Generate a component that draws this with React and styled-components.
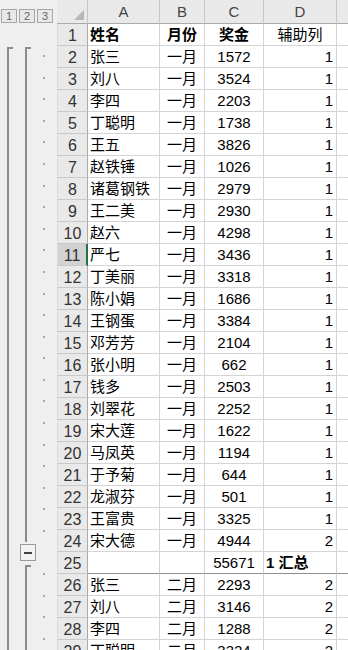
import React from 'react';
import styled, { createGlobalStyle, css } from 'styled-components';

const GlobalStyle = createGlobalStyle`
  html, body {
    margin: 0;
    padding: 0;
    background: #ffffff;
  }
  body {
    font-family: 'Liberation Sans', 'Noto Sans CJK SC', sans-serif;
  }
`;

const ROW_H = 22;
const HEAD_H = 24;

const rows = [
  ['张三', '一月', '1572', '1'],
  ['刘八', '一月', '3524', '1'],
  ['李四', '一月', '2203', '1'],
  ['丁聪明', '一月', '1738', '1'],
  ['王五', '一月', '3826', '1'],
  ['赵铁锤', '一月', '1026', '1'],
  ['诸葛钢铁', '一月', '2979', '1'],
  ['王二美', '一月', '2930', '1'],
  ['赵六', '一月', '4298', '1'],
  ['严七', '一月', '3436', '1'],
  ['丁美丽', '一月', '3318', '1'],
  ['陈小娟', '一月', '1686', '1'],
  ['王钢蛋', '一月', '3384', '1'],
  ['邓芳芳', '一月', '2104', '1'],
  ['张小明', '一月', '662', '1'],
  ['钱多', '一月', '2503', '1'],
  ['刘翠花', '一月', '2252', '1'],
  ['宋大莲', '一月', '1622', '1'],
  ['马凤英', '一月', '1194', '1'],
  ['于予菊', '一月', '644', '1'],
  ['龙淑芬', '一月', '501', '1'],
  ['王富贵', '一月', '3325', '1'],
  ['宋大德', '一月', '4944', '2'],
  { subtotal: true, amount: '55671', label: '1 汇总' },
  ['张三', '二月', '2293', '2'],
  ['刘八', '二月', '3146', '2'],
  ['李四', '二月', '1288', '2'],
  ['丁聪明', '二月', '3324', '2']
];

const ACTIVE_ROW = 11;

const Page = styled.div`
  display: flex;
  width: 348px;
  height: 650px;
  overflow: hidden;
  background: #ffffff;
`;

/* ---------- outline (group) panel ---------- */

const OutlinePanel = styled.div`
  flex: 0 0 57px;
  background: #efefef;
  display: flex;
  flex-direction: column;
`;

const LevelBar = styled.div`
  height: ${HEAD_H}px;
  box-sizing: border-box;
  display: flex;
  align-items: flex-end;
  gap: 2px;
  padding: 0 0 1px 1px;
`;

const LevelButton = styled.div`
  width: 16px;
  height: 14px;
  box-sizing: border-box;
  border: 1px solid #a6a6a6;
  background: #e8e8e8;
  color: #666;
  font-size: 11px;
  line-height: 12px;
  text-align: center;
`;

const OutlineRow = styled.div`
  height: ${ROW_H}px;
  display: grid;
  grid-template-columns: 18px 18px 18px;
`;

const Slot = styled.div`
  display: flex;
  align-items: ${p => (p.$center ? 'center' : 'stretch')};
  justify-content: ${p => (p.$center ? 'center' : 'flex-start')};
`;

const Bracket = styled.div`
  margin-left: 7px;
  width: 6px;
  box-sizing: border-box;
  border-left: 2px solid #8c8c8c;
  ${p =>
    p.$start &&
    css`
      margin-top: 2px;
      border-top: 2px solid #8c8c8c;
    `}
`;

const CollapseButton = styled.div`
  margin-left: 2px;
  width: 17px;
  height: 17px;
  box-sizing: border-box;
  border: 1px solid #9a9a9a;
  background: #f2f2f2;
  display: flex;
  align-items: center;
  justify-content: center;

  &::before {
    content: '';
    width: 8px;
    height: 2px;
    background: #444;
  }
`;

const Dot = styled.div`
  margin-left: 7px;
  align-self: center;
  width: 2px;
  height: 2px;
  background: #a8a8a8;
`;

/* ---------- sheet grid ---------- */

const Sheet = styled.div`
  flex: none;
  display: grid;
  grid-template-columns: 31px 72px 45px 59px 73px 73px;
  grid-template-rows: ${HEAD_H}px;
  grid-auto-rows: ${ROW_H}px;
  font-size: 15px;
  color: #000;
`;

const Corner = styled.div`
  position: relative;
  background: #e9e9e9;
  border-right: 1px solid #c6c6c6;
  border-bottom: 1px solid #ababab;

  &::after {
    content: '';
    position: absolute;
    right: 3px;
    bottom: 3px;
    border-style: solid;
    border-width: 0 0 10px 10px;
    border-color: transparent transparent #b7b7b7 transparent;
  }
`;

const ColHeader = styled.div`
  background: #e9e9e9;
  border-right: 1px solid #c6c6c6;
  border-bottom: 1px solid #ababab;
  color: #444;
  font-size: 15px;
  line-height: 24px;
  text-align: center;
  overflow: hidden;
`;

const RowHeader = styled.div`
  box-sizing: border-box;
  background: ${p => (p.$active ? '#d2d2d2' : '#e9e9e9')};
  border-left: 1px solid #dadada;
  border-right: ${p => (p.$active ? '2px solid #217346' : '1px solid #ababab')};
  border-bottom: 1px solid #c9c9c9;
  color: #333;
  font-size: 16px;
  line-height: 22px;
  padding-top: 1px;
  text-align: center;
`;

const Cell = styled.div`
  box-sizing: border-box;
  border-right: 1px solid #d4d4d4;
  border-bottom: 1px solid ${p => (p.$strong ? '#8e8e8e' : '#d4d4d4')};
  line-height: 22px;
  padding: 0 ${p => (p.$align === 'right' ? '3px' : '2px')};
  text-align: ${p => p.$align || 'left'};
  font-weight: ${p => (p.$bold ? 700 : 400)};
  white-space: nowrap;
  overflow: hidden;
`;

function OutlineMarks({ rowNo, subtotal, groupStart }) {
  if (rowNo === 1) return <OutlineRow />;
  return (
    <OutlineRow>
      <Slot>
        <Bracket $start={rowNo === 2} />
      </Slot>
      {subtotal ? (
        <Slot $center>
          <CollapseButton />
        </Slot>
      ) : (
        <Slot>
          <Bracket $start={groupStart} />
        </Slot>
      )}
      <Slot>{!subtotal && <Dot />}</Slot>
    </OutlineRow>
  );
}

export default function App() {
  return (
    <>
      <GlobalStyle />
      <Page>
        <OutlinePanel>
          <LevelBar>
            <LevelButton>1</LevelButton>
            <LevelButton>2</LevelButton>
            <LevelButton>3</LevelButton>
          </LevelBar>
          <OutlineMarks rowNo={1} />
          {rows.map((r, i) => {
            const rowNo = i + 2;
            const prev = rows[i - 1];
            return (
              <OutlineMarks
                key={rowNo}
                rowNo={rowNo}
                subtotal={!!r.subtotal}
                groupStart={i === 0 || (prev && prev.subtotal)}
              />
            );
          })}
        </OutlinePanel>

        <Sheet>
          <Corner />
          {['A', 'B', 'C', 'D', 'E'].map(c => (
            <ColHeader key={c}>{c}</ColHeader>
          ))}

          <RowHeader>1</RowHeader>
          <Cell $bold>姓名</Cell>
          <Cell $bold $align="center">月份</Cell>
          <Cell $bold $align="center">奖金</Cell>
          <Cell $align="center">辅助列</Cell>
          <Cell />

          {rows.map((r, i) => {
            const rowNo = i + 2;
            if (r.subtotal) {
              return (
                <React.Fragment key={rowNo}>
                  <RowHeader $active={rowNo === ACTIVE_ROW}>{rowNo}</RowHeader>
                  <Cell $strong />
                  <Cell $strong />
                  <Cell $strong $align="center">{r.amount}</Cell>
                  <Cell $strong $bold>{r.label}</Cell>
                  <Cell $strong />
                </React.Fragment>
              );
            }
            const [name, month, amount, helper] = r;
            return (
              <React.Fragment key={rowNo}>
                <RowHeader $active={rowNo === ACTIVE_ROW}>{rowNo}</RowHeader>
                <Cell>{name}</Cell>
                <Cell $align="center">{month}</Cell>
                <Cell $align="center">{amount}</Cell>
                <Cell $align="right">{helper}</Cell>
                <Cell />
              </React.Fragment>
            );
          })}
        </Sheet>
      </Page>
    </>
  );
}
